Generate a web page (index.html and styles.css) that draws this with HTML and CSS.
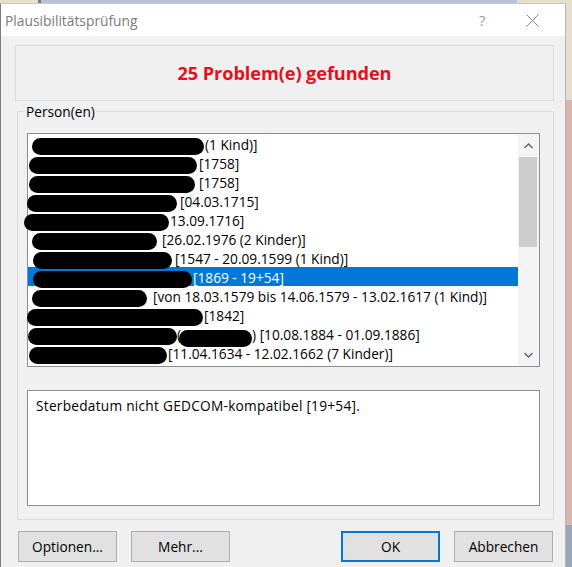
FILE: index.html
```html
<!DOCTYPE html>
<html lang="de">
<head>
<meta charset="utf-8">
<title>Plausibilitätsprüfung</title>
<link rel="stylesheet" href="styles.css">
</head>
<body>
<div class="window">
  <div class="titlebar">
    <span class="title">Plausibilitätsprüfung</span>
    <span class="help">?</span>
    <span class="close"><svg width="13" height="13" viewBox="0 0 13 13"><path d="M0.5 0.5L12.5 12.5M12.5 0.5L0.5 12.5" stroke="#8c8c8c" stroke-width="1" fill="none"/></svg></span>
  </div>
  <div class="content">
    <div class="summary">25 Problem(e) gefunden</div>
    <fieldset class="group">
      <legend>Person(en)</legend>
      <div class="listbox">
        <ul class="items">
          <li class="row"><span class="redact" style="--x:4px;--w:172px;--g:1px"></span><span class="txt">(1 Kind)]</span></li>
          <li class="row"><span class="redact" style="--x:1px;--w:168px;--g:2px"></span><span class="txt">[1758]</span></li>
          <li class="row"><span class="redact" style="--x:1px;--w:166px;--g:4px"></span><span class="txt">[1758]</span></li>
          <li class="row"><span class="redact" style="--x:-1px;--w:150px;--g:3px"></span><span class="txt">[04.03.1715]</span></li>
          <li class="row"><span class="redact" style="--x:-4px;--w:145px;--g:1px"></span><span class="txt">13.09.1716]</span></li>
          <li class="row"><span class="redact" style="--x:4px;--w:125px;--g:5px"></span><span class="txt">[26.02.1976 (2 Kinder)]</span></li>
          <li class="row"><span class="redact" style="--x:5px;--w:139px;--g:3px"></span><span class="txt">[1547 - 20.09.1599 (1 Kind)]</span></li>
          <li class="row selected"><span class="redact" style="--x:5px;--w:159px;--g:1px"></span><span class="txt">[1869 - 19+54]</span></li>
          <li class="row"><span class="redact" style="--x:4px;--w:115px;--g:6px"></span><span class="txt">[von 18.03.1579 bis 14.06.1579 - 13.02.1617 (1 Kind)]</span></li>
          <li class="row"><span class="redact" style="--x:-1px;--w:176px;--g:1px"></span><span class="txt">[1842]</span></li>
          <li class="row"><span class="redact" style="--x:0px;--w:149px;--g:0px"></span><span class="txt">(</span><span class="redact low" style="--x:-2px;--w:73px;--g:0px"></span><span class="txt">) [10.08.1884 - 01.09.1886]</span></li>
          <li class="row"><span class="redact" style="--x:1px;--w:138px;--g:1px"></span><span class="txt">[11.04.1634 - 12.02.1662 (7 Kinder)]</span></li>
        </ul>
        <div class="scrollbar">
          <div class="arrow"><svg width="9" height="6" viewBox="0 0 9 6"><path d="M0.5 5L4.5 1L8.5 5" stroke="#606060" stroke-width="1.3" fill="none"/></svg></div>
          <div class="track"><div class="thumb"></div></div>
          <div class="arrow"><svg width="9" height="6" viewBox="0 0 9 6"><path d="M0.5 1L4.5 5L8.5 1" stroke="#606060" stroke-width="1.3" fill="none"/></svg></div>
        </div>
      </div>
      <div class="detail">Sterbedatum nicht GEDCOM-kompatibel [19+54].</div>
    </fieldset>
    <div class="buttons">
      <button class="btn">Optionen...</button>
      <button class="btn">Mehr...</button>
      <span class="spacer"></span>
      <button class="btn default">OK</button>
      <button class="btn">Abbrechen</button>
    </div>
  </div>
</div>
</body>
</html>
```
FILE: styles.css
```css
html {
  background:
    linear-gradient(to right, #e6dfcc 0 38px, #7a7a7a 38px 41px, #b9c2da 41px 517px, #e6dfcc 517px) top left / 100% 3px no-repeat,
    linear-gradient(#e6dfcc 0 100px, #d9b6a9 100px 525px, #97a6bd 525px) top right / 6px 100% no-repeat,
    #e6dfcc;
  height: 100%;
}
body {
  margin: 0;
  font-family: "Open Sans", "Noto Sans", sans-serif;
  font-size: 13.7px;
  color: #000;
}
.window {
  box-sizing: border-box;
  width: 566px;
  height: 564px;
  margin-top: 3px;
  border-left: 1px solid #7c7c7c;
  border-right: 1px solid #b4b4b4;
  border-top: 1px solid #c8c8c8;
  background: #f0f0f0;
  overflow: hidden;
}
.titlebar {
  height: 32px;
  background: #fff;
  display: flex;
  align-items: center;
  padding-left: 4px;
}
.title {
  color: #7a7a7a;
  font-size: 13.8px;
  flex: 1;
}
.help {
  color: #9a9a9a;
  font-size: 15px;
  width: 10px;
  margin-right: 37px;
}
.close {
  display: flex;
  width: 13px;
  margin-right: 26px;
}
.content {
  padding-top: 9px;
}
.summary {
  box-sizing: border-box;
  margin-left: 14px;
  width: 539px;
  height: 56px;
  border: 1px solid #dadada;
  display: flex;
  align-items: center;
  justify-content: center;
  color: #e5101c;
  font-weight: 700;
  font-size: 18.2px;
  letter-spacing: -0.1px;
}
.group {
  box-sizing: border-box;
  margin: 1px 0 0 16px;
  width: 537px;
  min-inline-size: 0;
  padding: 0 0 13px 9px;
  border: 1px solid #dcdcdc;
}
.group legend {
  padding: 0 1px;
  margin-left: -2px;
  line-height: 19px;
}
.listbox {
  box-sizing: border-box;
  margin-top: 12px;
  width: 513px;
  height: 234px;
  border: 1px solid #8b8e94;
  background: #fff;
  display: flex;
}
.items {
  list-style: none;
  margin: 0;
  padding: 0;
  flex: 1;
}
.row {
  height: 19px;
  line-height: 21px;
  display: flex;
  align-items: flex-start;
  white-space: nowrap;
}
.row.selected {
  background: #0078d7;
  color: #fff;
}
.redact {
  flex: none;
  display: inline-block;
  height: 17px;
  margin-top: 4px;
  margin-left: var(--x);
  margin-right: var(--g);
  width: var(--w);
  background: #000;
  border-radius: 9px;
  position: relative;
  z-index: 1;
}
.redact.low {
  margin-top: 6px;
}
.scrollbar {
  width: 21px;
  display: flex;
  flex-direction: column;
  background: #f4f4f4;
}
.arrow {
  height: 23px;
  display: flex;
  align-items: center;
  justify-content: center;
}
.track {
  flex: 1;
}
.thumb {
  margin: 0 2px 0 1px;
  height: 90px;
  background: #cdcdcd;
}
.detail {
  box-sizing: border-box;
  margin-top: 23px;
  width: 513px;
  height: 116px;
  border: 1px solid #8b8e94;
  background: #fff;
  padding: 5px 8px;
  line-height: 19px;
  letter-spacing: 0.25px;
}
.buttons {
  display: flex;
  gap: 14px;
  margin: 11px 0 0 17px;
  width: 535px;
}
.spacer {
  flex: 1;
}
.btn {
  box-sizing: border-box;
  width: 99px;
  height: 31px;
  background: #e1e1e1;
  border: 1px solid #adadad;
  font-family: "Open Sans", "Noto Sans", sans-serif;
  font-size: 13.7px;
  color: #000;
  padding: 0;
}
.btn.default {
  border: 2px solid #0078d7;
}
```
